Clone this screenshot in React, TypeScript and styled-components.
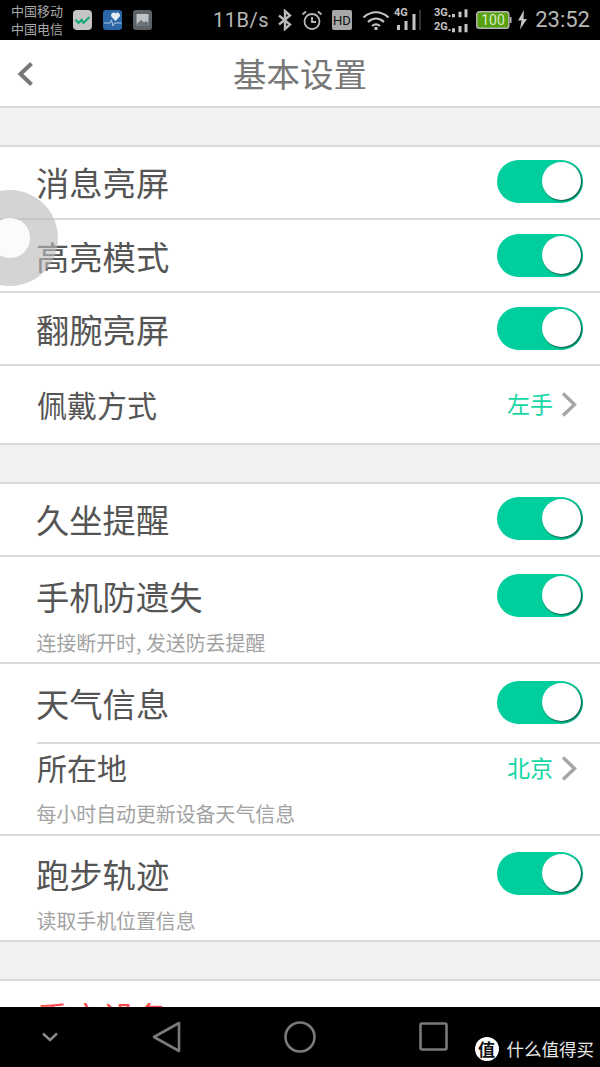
import React from 'react';
import styled, { createGlobalStyle } from 'styled-components';

const Global = createGlobalStyle`
  html, body { margin: 0; padding: 0; background: #000; }
  * { box-sizing: border-box; }
`;

const CJK = `"Noto Sans CJK SC", "Noto Sans", sans-serif`;
const TEAL = '#00cf9d';
const LINE = '#d8dadc';

const Screen = styled.div`
  position: relative;
  width: 600px;
  height: 1067px;
  overflow: hidden;
  display: flex;
  flex-direction: column;
  background: #f2f2f2;
  font-family: ${CJK};
`;

/* Status bar */
const StatusBar = styled.div`
  flex: none;
  height: 40px;
  background: #000;
  color: #b8b8b8;
  display: flex;
  align-items: center;
  padding: 0 10px 0 11px;
`;
const Carriers = styled.div`
  width: 62px;
  font-size: 13px;
  line-height: 18px;
  color: #a8a8a8;
  white-space: nowrap;
`;
const AppIcon = styled.svg`
  display: block;
  width: 19px;
  height: 20px;
  margin-right: 11px;
`;
const Speed = styled.span`
  margin-left: 50px;
  font: 20px/40px Roboto, sans-serif;
  letter-spacing: 0.5px;
  color: #b8b8b8;
`;
const StatusRight = styled.div`
  margin-left: auto;
  display: flex;
  align-items: center;
`;
const StatusIcon = styled.svg<{ $gap: number }>`
  display: block;
  margin-left: ${p => p.$gap}px;
`;
const Clock = styled.span`
  margin-left: 6px;
  font: 22px/40px Roboto, sans-serif;
  color: #b8b8b8;
`;

/* Title bar */
const NavBar = styled.div`
  flex: none;
  position: relative;
  height: 68px;
  background: #fff;
  border-bottom: 2px solid ${LINE};
  display: flex;
  align-items: center;
  justify-content: center;
`;
const BackButton = styled.svg`
  position: absolute;
  left: 17px;
  top: 21px;
`;
const Title = styled.h1`
  margin: 0 0 1px;
  font-size: 33.5px;
  font-weight: 400;
  line-height: 68px;
  color: #777;
`;

/* Settings list */
const Content = styled.div`
  flex: 1;
  min-height: 0;
  overflow: hidden;
`;
const Section = styled.section`
  margin-top: 37px;
  background: #fff;
  border-top: 2px solid ${LINE};
  border-bottom: 2px solid ${LINE};
`;
const Row = styled.div`
  background: #fff;
  & + & { border-top: 2px solid ${LINE}; }
`;
const RowMain = styled.div<{ $height: number; $lift?: number }>`
  height: ${p => p.$height}px;
  padding: 0 17px ${p => p.$lift ?? 0}px 36px;
  display: flex;
  align-items: center;
  justify-content: space-between;
`;
const Label = styled.span<{ $danger?: boolean }>`
  font-size: 33.3px;
  line-height: 40px;
  color: ${p => (p.$danger ? '#ff4b4b' : '#555')};
`;
const SmallLabel = styled(Label)`
  margin: 0 0 2px 1px;
  font-size: 30px;
`;
const Hint = styled.div<{ $height: number; $top?: number }>`
  height: ${p => p.$height}px;
  padding: ${p => p.$top ?? 0}px 0 0 36.5px;
  font-size: 19.9px;
  line-height: 18px;
  color: #a2a2a2;
`;
const Inset = styled.div`
  height: 2px;
  margin-left: 37px;
  background: ${LINE};
`;
const ToggleTrack = styled.div`
  position: relative;
  width: 86px;
  height: 43px;
  border-radius: 22px;
  background: ${TEAL};
`;
const ToggleKnob = styled.div`
  position: absolute;
  right: 2px;
  top: 2px;
  width: 39px;
  height: 38px;
  border-radius: 50%;
  background: #fff;
  box-shadow: 1px 1px 2px rgba(0, 50, 38, 0.85);
`;
const ValueLink = styled.div`
  display: flex;
  align-items: center;
  gap: 8px;
  margin-right: 6px;
  font-size: 23px;
  color: #14d6a4;
`;
const ValueText = styled.span`
  padding-bottom: 3px;
`;

/* Floating assistive ball */
const FloatBall = styled.div`
  position: absolute;
  left: -38px;
  top: 190px;
  width: 96px;
  height: 96px;
  border-radius: 50%;
  background: rgba(186, 186, 186, 0.62);
  display: flex;
  align-items: center;
  justify-content: center;
  &::after {
    content: '';
    width: 40px;
    height: 40px;
    border-radius: 50%;
    background: #fbfbfb;
  }
`;

/* Navigation keys */
const KeyBar = styled.div`
  flex: none;
  position: relative;
  height: 60px;
  background: #000;
`;
const KeyIcon = styled.svg`
  display: block;
  position: absolute;
`;
const Badge = styled.div`
  position: absolute;
  right: 6px;
  bottom: 5px;
  display: flex;
  align-items: center;
  gap: 8px;
  color: #e8e8e8;
  font-size: 17.5px;
  line-height: 26px;
`;
const BadgeMark = styled.span`
  width: 24px;
  height: 24px;
  border-radius: 50%;
  background: #fff;
  color: #111;
  font: 700 17px/24px "Noto Sans CJK SC", sans-serif;
  text-align: center;
`;

const Toggle = () => (
  <ToggleTrack>
    <ToggleKnob />
  </ToggleTrack>
);

const Chevron = () => (
  <svg width="16" height="25" viewBox="0 0 16 25" fill="none" stroke="#a6a6a6" strokeWidth="3.4">
    <path d="M2 1.5 13.500 12.500 2 23.500" />
  </svg>
);

const Value = ({ children }: { children: React.ReactNode }) => (
  <ValueLink>
    <ValueText>{children}</ValueText>
    <Chevron />
  </ValueLink>
);

export default function App() {
  return (
    <Screen>
      <Global />
      <StatusBar>
        <Carriers>
          中国移动
          <br />
          中国电信
        </Carriers>
        <AppIcon viewBox="0 0 19 20">
          <rect width="19" height="20" rx="4" fill="#c4c6c4" />
          <path d="M2.500 9.500l3 3.500 4-4M8 9.500l2.500 3.500 6-6" fill="none" stroke="#14a77e" strokeWidth="2" />
        </AppIcon>
        <AppIcon viewBox="0 0 19 20">
          <rect width="19" height="20" rx="3" fill="#2a66a8" />
          <path d="M12.500 11 8.500 6.800a2.600 2.600 0 0 1 4-3.300 2.600 2.600 0 0 1 4 3.300z" fill="#e4ecf2" />
          <path d="M1 13h6l1.500-3 1.500 6 1.500-3h7" fill="none" stroke="#cfe0ee" strokeWidth="0.8" />
        </AppIcon>
        <AppIcon viewBox="0 0 19 20">
          <rect width="19" height="20" rx="3" fill="#5b6368" />
          <rect x="3.500" y="4" width="12" height="12" fill="#c0c4c6" />
          <path d="M3.500 14 8 10l3 2.500 2-1.500 2.500 2v3h-12z" fill="#6b7378" />
        </AppIcon>
        <Speed>11B/s</Speed>
        <StatusIcon $gap={8} width="16" height="22" viewBox="0 0 16 22" fill="none" stroke="#b8b8b8" strokeWidth="2.4">
          <path d="M2 6.500 13 15.500 8 20V2l5 4.500L2 15.500" />
        </StatusIcon>
        <StatusRight>
          <StatusIcon $gap={0} width="22" height="22" viewBox="0 0 22 22" fill="none" stroke="#b8b8b8" strokeWidth="1.8">
            <circle cx="11" cy="12.500" r="7.500" />
            <path d="M11 8v5h4M1.500 5.500 5 2.500M20.500 5.500 17 2.500" />
          </StatusIcon>
          <StatusIcon $gap={9} width="20" height="20" viewBox="0 0 20 20">
            <rect width="20" height="20" rx="2" fill="#a8a8a8" />
            <text x="10" y="15" fontFamily="Roboto" fontSize="13" textAnchor="middle" fill="#111">HD</text>
          </StatusIcon>
          <StatusIcon $gap={10} width="28" height="22" viewBox="0 0 28 22" fill="none" stroke="#c4c4c4" strokeWidth="2.2">
            <path d="M1.500 8.500C9 1.500 19 1.500 26.500 8.500M6 13c5-4.500 11-4.500 16 0M10 17c2.500-2 5.500-2 8 0" />
            <circle cx="14" cy="19.500" r="1.800" fill="#c4c4c4" stroke="none" />
          </StatusIcon>
          <StatusIcon $gap={4} width="27" height="26" viewBox="0 0 27 26">
            <text x="0" y="9" fontFamily="Roboto" fontWeight="700" fontSize="11" fill="#c4c4c4">4G</text>
            <rect x="3" y="18" width="3" height="5" fill="#c4c4c4" />
            <rect x="10.500" y="14" width="3" height="9" fill="#c4c4c4" />
            <rect x="18.500" y="7" width="3" height="16" fill="#c4c4c4" />
            <rect x="25" y="3" width="2" height="20" fill="#333" />
          </StatusIcon>
          <StatusIcon $gap={13} width="34" height="26" viewBox="0 0 34 26">
            <text x="0" y="9" fontFamily="Roboto" fontWeight="700" fontSize="11" fill="#c4c4c4">3G</text>
            <text x="0" y="23" fontFamily="Roboto" fontWeight="700" fontSize="11" fill="#c4c4c4">2G</text>
            <path d="M18 7h3v3.300h-3zM24.500 4.700h3v5.600h-3zM30.500 2.300h3v8h-3zM18 21.300h3v4h-3zM24.500 19h3v6.300h-3zM30.500 17h3v8.300h-3zM14.500 8h2v2h-2zM14.500 22h2v2h-2z" fill="#c4c4c4" />
          </StatusIcon>
          <StatusIcon $gap={8} width="36" height="20" viewBox="0 0 36 20">
            <rect x="0.800" y="1.800" width="32" height="16.500" rx="2.500" fill="#57a10f" stroke="#b4b4b4" strokeWidth="1.500" />
            <rect x="33.500" y="7" width="2" height="6" fill="#b4b4b4" />
            <text x="17" y="15" fontFamily="Roboto" fontSize="14" textAnchor="middle" fill="#d8e8c8">100</text>
          </StatusIcon>
          <StatusIcon $gap={5} width="12" height="20" viewBox="0 0 12 20">
            <path d="M7 0 1 10.500h3.500L3 19.500 10 9H6.500z" fill="#c4c4c4" />
          </StatusIcon>
          <Clock>23:52</Clock>
        </StatusRight>
      </StatusBar>

      <NavBar>
        <BackButton width="18" height="26" viewBox="0 0 18 26" fill="none" stroke="#777" strokeWidth="4">
          <path d="M14.500 2.500 3.500 13l11 10.500" />
        </BackButton>
        <Title>基本设置</Title>
      </NavBar>

      <Content>
        <Section>
          <Row>
            <RowMain $height={71} $lift={2}><Label>消息亮屏</Label><Toggle /></RowMain>
          </Row>
          <Row>
            <RowMain $height={71}><Label>高亮模式</Label><Toggle /></RowMain>
          </Row>
          <Row>
            <RowMain $height={71}><Label>翻腕亮屏</Label><Toggle /></RowMain>
          </Row>
          <Row>
            <RowMain $height={77}><SmallLabel>佩戴方式</SmallLabel><Value>左手</Value></RowMain>
          </Row>
        </Section>

        <Section>
          <Row>
            <RowMain $height={71} $lift={2}><Label>久坐提醒</Label><Toggle /></RowMain>
          </Row>
          <Row>
            <RowMain $height={77}><Label>手机防遗失</Label><Toggle /></RowMain>
            <Hint $height={28}>连接断开时, 发送防丢提醒</Hint>
          </Row>
          <Row>
            <RowMain $height={78} $lift={1}><Label>天气信息</Label><Toggle /></RowMain>
            <Inset />
            <RowMain $height={48}><SmallLabel>所在地</SmallLabel><Value>北京</Value></RowMain>
            <Hint $height={42} $top={13}>每小时自动更新设备天气信息</Hint>
          </Row>
          <Row>
            <RowMain $height={75}><Label>跑步轨迹</Label><Toggle /></RowMain>
            <Hint $height={29} $top={1}>读取手机位置信息</Hint>
          </Row>
        </Section>

        <Section>
          <Row>
            <RowMain $height={71}><Label $danger>重启设备</Label></RowMain>
          </Row>
        </Section>
      </Content>

      <KeyBar>
        <KeyIcon style={{ left: 41, top: 24 }} width="18" height="12" viewBox="0 0 18 12" fill="none" stroke="#8a8a8a" strokeWidth="2.4">
          <path d="M2 2.500 9 9l7-6.500" />
        </KeyIcon>
        <KeyIcon style={{ left: 152, top: 14 }} width="30" height="32" viewBox="0 0 30 32" fill="none" stroke="#7a7a7a" strokeWidth="2.6" strokeLinejoin="round">
          <path d="M27 2v28L2 16z" />
        </KeyIcon>
        <KeyIcon style={{ left: 284, top: 14 }} width="32" height="32" viewBox="0 0 32 32" fill="none" stroke="#7a7a7a" strokeWidth="2.6">
          <circle cx="16" cy="16" r="14.500" />
        </KeyIcon>
        <KeyIcon style={{ left: 419, top: 15 }} width="29" height="29" viewBox="0 0 29 29" fill="none" stroke="#7a7a7a" strokeWidth="2.6" strokeLinejoin="round">
          <rect x="1.500" y="1.500" width="26" height="26" rx="1.500" />
        </KeyIcon>
        <Badge>
          <BadgeMark>值</BadgeMark>
          什么值得买
        </Badge>
      </KeyBar>

      <FloatBall />
    </Screen>
  );
}
